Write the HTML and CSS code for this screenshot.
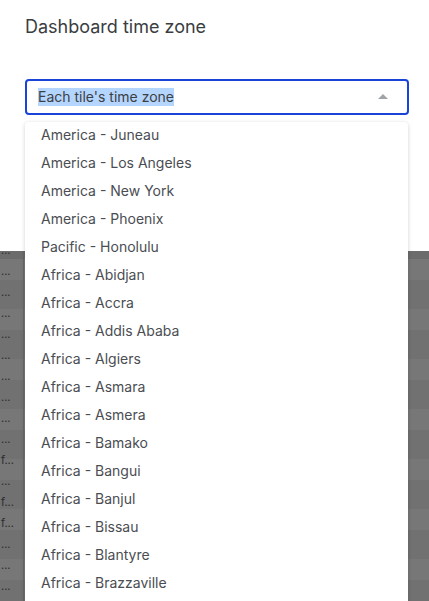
FILE: index.html
```html
<!DOCTYPE html>
<html>
<head>
<meta charset="utf-8">
<link rel="stylesheet" href="styles.css">
</head>
<body>
<div class="dialog">
  <h2 class="title">Dashboard time zone</h2>
  <div class="select">
    <span class="value">Each tile's time zone</span>
    <span class="caret"></span>
  </div>
</div>
<div class="backdrop">
  <div class="cells">
    <div>...</div>
    <div>...</div>
    <div>...</div>
    <div>...</div>
    <div>...</div>
    <div>...</div>
    <div>...</div>
    <div>...</div>
    <div>...</div>
    <div>...</div>
    <div>f...</div>
    <div>...</div>
    <div>f...</div>
    <div>f...</div>
    <div>...</div>
    <div>...</div>
    <div>...</div>
  </div>
</div>
<ul class="menu">
  <li>America - Juneau</li>
  <li>America - Los Angeles</li>
  <li>America - New York</li>
  <li>America - Phoenix</li>
  <li>Pacific - Honolulu</li>
  <li>Africa - Abidjan</li>
  <li>Africa - Accra</li>
  <li>Africa - Addis Ababa</li>
  <li>Africa - Algiers</li>
  <li>Africa - Asmara</li>
  <li>Africa - Asmera</li>
  <li>Africa - Bamako</li>
  <li>Africa - Bangui</li>
  <li>Africa - Banjul</li>
  <li>Africa - Bissau</li>
  <li>Africa - Blantyre</li>
  <li>Africa - Brazzaville</li>
</ul>
</body>
</html>
```
FILE: styles.css
```css
html, body {
  margin: 0;
  padding: 0;
  height: 601px;
  overflow: hidden;
  font-family: Inter, "Noto Sans", sans-serif;
}
body {
  position: relative;
  background: #ffffff;
}
.dialog {
  height: 251px;
  box-sizing: border-box;
  padding: 15px 20px 0 25px;
  background: #ffffff;
}
.title {
  margin: 0;
  font-size: 18px;
  font-weight: 400;
  line-height: 24px;
  color: #3a3d41;
}
.select {
  margin-top: 40px;
  width: 384px;
  height: 36px;
  box-sizing: border-box;
  border: 2px solid #1a44d8;
  border-radius: 4px;
  display: flex;
  align-items: center;
  justify-content: space-between;
  padding: 0 19px 0 11px;
}
.value {
  font-size: 14px;
  line-height: 18px;
  color: #3c4043;
  background: #b4d5fe;
}
.caret {
  width: 0;
  height: 0;
  border-left: 5px solid transparent;
  border-right: 5px solid transparent;
  border-bottom: 5px solid #a0a3a8;
  margin-top: -1px;
}
.backdrop {
  display: flow-root;
  height: 350px;
  background:
    linear-gradient(to right, transparent 23px, #676767 23px, #676767 24px, transparent 24px),
    linear-gradient(to bottom, #6c6c6c 0, #6c6c6c 8px, transparent 8px),
    repeating-linear-gradient(to bottom, #717171 0, #717171 8px, #777777 8px, #777777 29px, #717171 29px, #717171 50px);
}
.cells {
  margin-top: -11px;
  width: 23px;
  padding-left: 1px;
  box-sizing: border-box;
  overflow: hidden;
}
.cells div {
  height: 21px;
  line-height: 21px;
  font-size: 11px;
  color: #2c2c2c;
  white-space: nowrap;
}
.menu {
  position: absolute;
  left: 25px;
  top: 122px;
  width: 383px;
  height: 500px;
  margin: 0;
  padding: 0;
  list-style: none;
  background: #ffffff;
  border-radius: 4px;
  box-shadow: 0 1px 4px rgba(0, 0, 0, 0.18);
  overflow: hidden;
}
.menu li {
  height: 28px;
  line-height: 28px;
  padding-left: 16px;
  font-size: 14px;
  color: #4a4d52;
  white-space: nowrap;
}
.menu li:first-child {
  margin-top: -1px;
}
```
